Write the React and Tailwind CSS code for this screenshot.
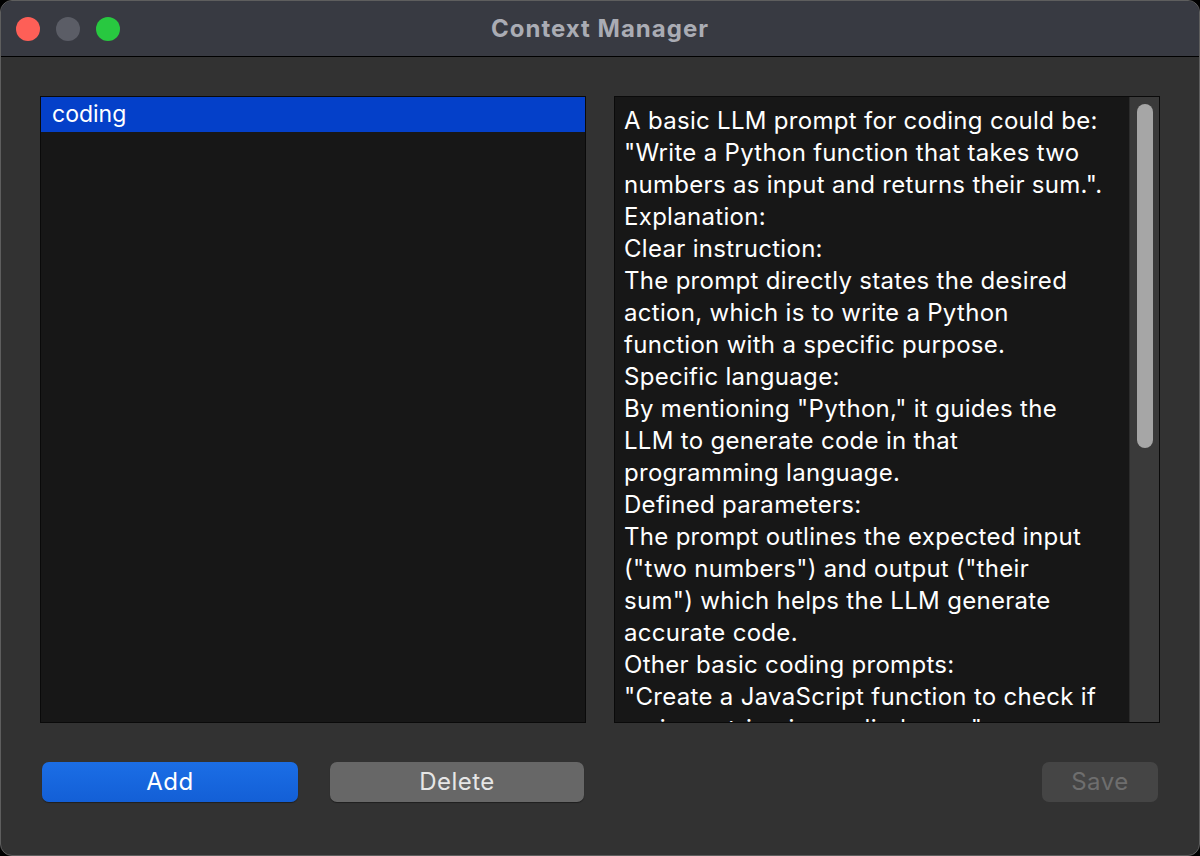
import React from 'react';

const lines = [
  'A basic LLM prompt for coding could be:',
  '"Write a Python function that takes two',
  'numbers as input and returns their sum.".',
  'Explanation:',
  'Clear instruction:',
  'The prompt directly states the desired',
  'action, which is to write a Python',
  'function with a specific purpose.',
  'Specific language:',
  'By mentioning "Python," it guides the',
  'LLM to generate code in that',
  'programming language.',
  'Defined parameters:',
  'The prompt outlines the expected input',
  '("two numbers") and output ("their',
  'sum") which helps the LLM generate',
  'accurate code.',
  'Other basic coding prompts:',
  '"Create a JavaScript function to check if',
  'a given string is a palindrome."',
];

export default function App() {
  return (
    <div className="w-[1200px] h-[856px] bg-black font-['Inter','Liberation_Sans',Arial,sans-serif]">
      <div className="w-full h-full flex flex-col rounded-[12px] overflow-hidden border border-[#5e5e5e] bg-[#323232]">
        {/* Title bar */}
        <div className="relative h-[56px] shrink-0 flex items-center bg-[#383a42] border-b border-black">
          <div className="flex items-center gap-[16px] pl-[15px]">
            <span className="w-[24px] h-[24px] rounded-full bg-[#fe5f57]" />
            <span className="w-[24px] h-[24px] rounded-full bg-[#5b5d66]" />
            <span className="w-[24px] h-[24px] rounded-full bg-[#28c840]" />
          </div>
          <div className="absolute inset-0 flex items-center justify-center pointer-events-none">
            <span className="text-[24px] font-bold tracking-[1px] text-[#aaacb4]">Context Manager</span>
          </div>
        </div>

        {/* Body */}
        <div className="flex-1 flex flex-col pt-[39px] px-[39px]">
          <div className="flex gap-[28px] h-[627px]">
            <div className="w-[546px] h-full bg-[#171717] border border-[#0a0a0a]">
              <div className="h-[35px] bg-[#0440c9] flex items-center pl-[11px] text-white text-[23px]">
                coding
              </div>
            </div>
            <div className="w-[546px] h-full bg-[#171717] border border-[#0a0a0a] flex overflow-hidden">
              <div className="flex-1 pl-[9px] pt-[8px] text-white text-[24px] tracking-[0.3px] leading-[32px] overflow-hidden whitespace-nowrap">
                {lines.map((l, i) => (
                  <div key={i}>{l}</div>
                ))}
              </div>
              <div className="w-[30px] h-full bg-[#3a3a3a] border-l border-[#2c2c2c] flex justify-center pt-[7px]">
                <div className="w-[16px] h-[344px] rounded-full bg-[#a6a6a6]" />
              </div>
            </div>
          </div>

          <div className="flex items-center mt-[39px] text-[24px] tracking-[0.5px]">
            <button className="ml-[2px] w-[256px] h-[40px] rounded-[7px] bg-gradient-to-b from-[#1b6ee6] to-[#135fd6] text-white shadow-[0_1px_1px_rgba(0,0,0,0.4)]">
              Add
            </button>
            <button className="ml-[32px] w-[254px] h-[40px] rounded-[7px] bg-[#676767] text-[#e6e6e6] shadow-[0_1px_1px_rgba(0,0,0,0.4)]">
              Delete
            </button>
            <div className="flex-1" />
            <button className="mr-[2px] w-[116px] h-[40px] rounded-[7px] bg-[#454545] text-[#6e6e6e]">
              Save
            </button>
          </div>
        </div>
      </div>
    </div>
  );
}
